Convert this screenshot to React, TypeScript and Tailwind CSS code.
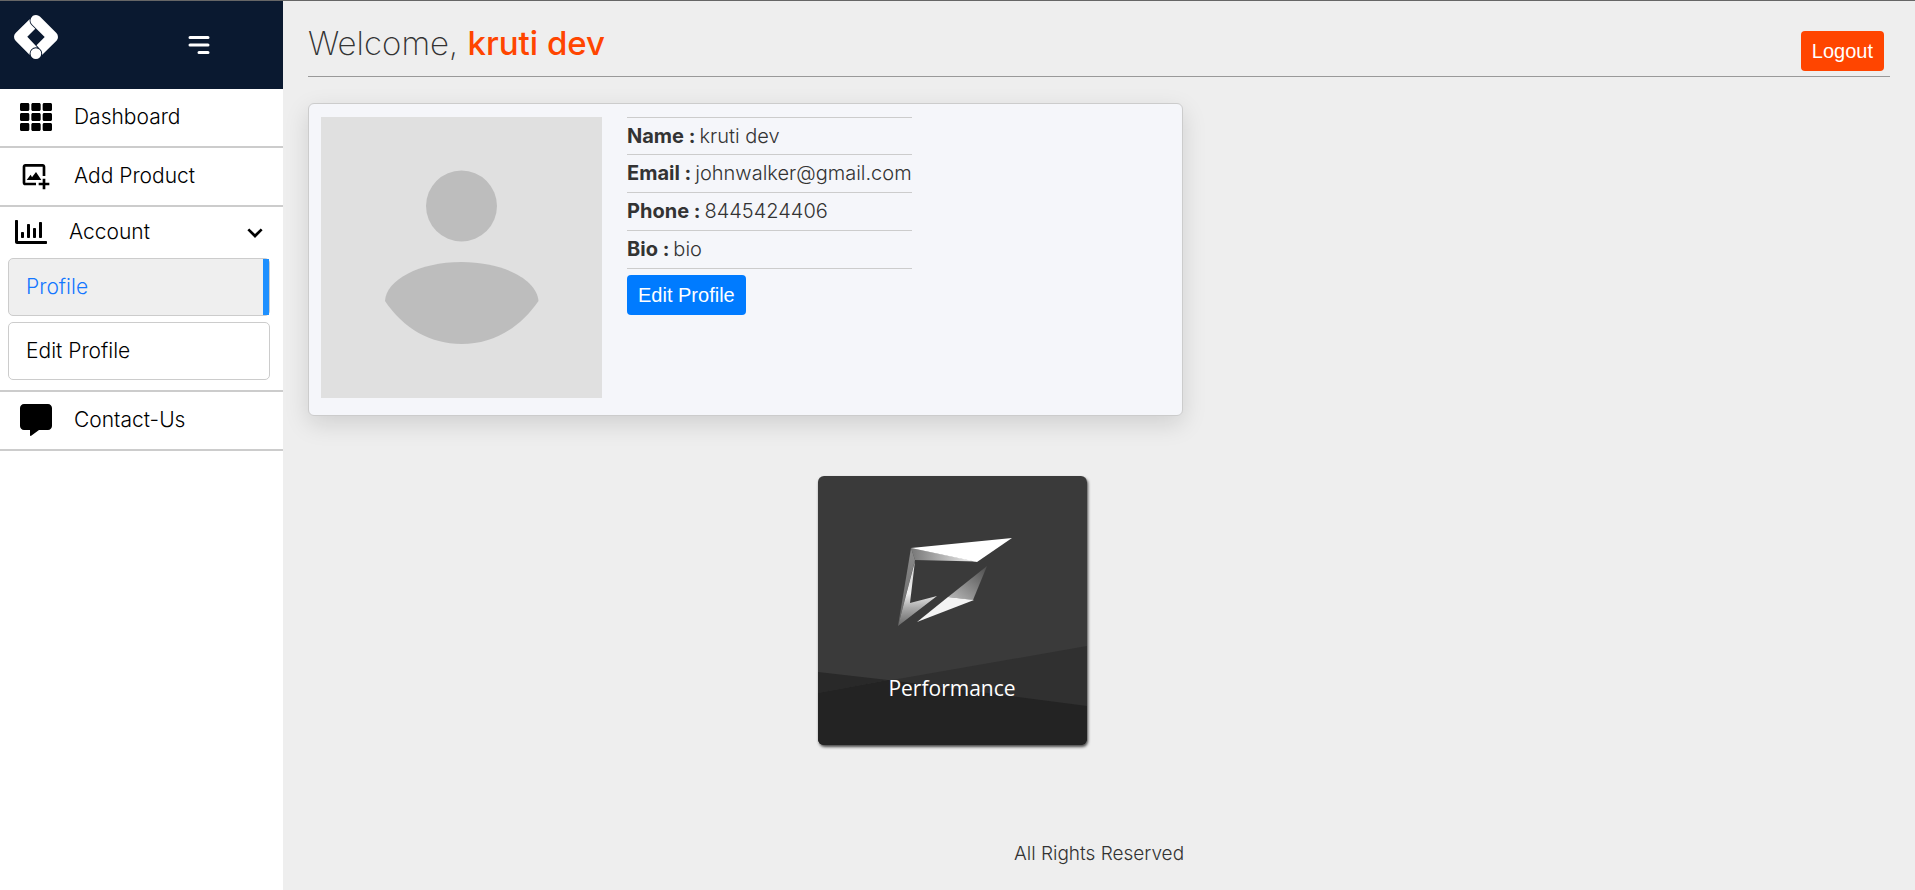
import React from "react";
import { FaTh, FaRegChartBar, FaCommentAlt } from "react-icons/fa";
import { BiImageAdd, BiChevronDown } from "react-icons/bi";
import { HiMenuAlt3 } from "react-icons/hi";
import { SiGoogletagmanager } from "react-icons/si";

const details = [
  { label: "Name", value: "kruti dev" },
  { label: "Email", value: "johnwalker@gmail.com" },
  { label: "Phone", value: "8445424406" },
  { label: "Bio", value: "bio" },
];

function NavLink({ icon, label }: { icon: React.ReactNode; label: string }) {
  return (
    <a href="#" className="flex h-[59px] items-center gap-[22px] border-b-2 border-[#ccc] pb-px pl-5 text-black">
      {icon}
      <span>{label}</span>
    </a>
  );
}

function Sidebar() {
  return (
    <aside className="w-[283px] shrink-0 bg-white text-[21px]">
      <div className="flex h-[88px] items-start justify-between bg-[#0a1930] pt-[14px] pr-[69px] pl-[14px] text-white">
        <SiGoogletagmanager size={44} aria-label="Logo" />
        <button type="button" aria-label="Toggle menu" className="pt-[15px]">
          <HiMenuAlt3 size={30} />
        </button>
      </div>
      <nav>
        <NavLink icon={<FaTh size={32} />} label="Dashboard" />
        <NavLink icon={<BiImageAdd size={32} />} label="Add Product" />
        <div className="border-b-2 border-[#ccc] pb-[10px]">
          <button type="button" aria-expanded="true" className="flex h-[51px] w-full items-center pr-3 pb-px pl-[15px]">
            <FaRegChartBar size={32} />
            <span className="ml-[22px] flex-1 text-left">Account</span>
            <BiChevronDown size={32} />
          </button>
          <div className="flex flex-col gap-[6px] pr-[13px] pl-2">
            <a href="#" className="flex h-[58px] items-stretch justify-between rounded-[5px] border border-[#ccc] bg-[#efefef] text-[#1477ff]">
              <span className="self-center pl-[17px]">Profile</span>
              <span className="w-[6px] bg-[#1e90ff]" />
            </a>
            <a href="#" className="flex h-[58px] items-center rounded-[5px] border border-[#ccc] pl-[17px] text-black">
              Edit Profile
            </a>
          </div>
        </div>
        <NavLink icon={<FaCommentAlt size={32} />} label="Contact-Us" />
      </nav>
    </aside>
  );
}

function Avatar() {
  return (
    <svg viewBox="0 0 281 281" className="size-[281px] shrink-0 bg-[#e0e0e0]" role="img" aria-label="Profile photo">
      <circle cx="140.5" cy="89" r="35.5" fill="#bdbdbd" />
      <path
        d="M64 184C65 163 98 145 140.500 145S216 163 217.500 184C199 211 172 227 140.500 227S82 211 64 184Z"
        fill="#bdbdbd"
      />
    </svg>
  );
}

function ProfileCard() {
  return (
    <section className="mt-[26px] flex w-[875px] max-w-full gap-[25px] rounded-[6px] border border-[#ccc] bg-[#f5f6fa] px-3 pt-[13px] pb-[17px] shadow-[0_8px_24px_rgba(0,0,0,0.13)]">
      <Avatar />
      <div>
        <dl className="min-w-[285px]">
          {details.map((d) => (
            <div
              key={d.label}
              className="flex h-[38px] items-center gap-1 border-b border-[#ccc] pb-px first:border-t"
            >
              <dt className="font-bold text-[#333]">{d.label} :</dt>
              <dd className="text-[#333]">{d.value}</dd>
            </div>
          ))}
        </dl>
        <button
          type="button"
          className="mt-[6px] h-10 rounded-[4px] bg-[#007bff] px-[11px] font-['Liberation_Sans',sans-serif] text-xl font-normal text-white"
        >
          Edit Profile
        </button>
      </div>
    </section>
  );
}

function PerformanceArt() {
  return (
    <svg viewBox="0 0 269 269" className="size-full" aria-hidden="true">
      <defs>
        <linearGradient id="side" x1="0" y1="0" x2="1" y2="0">
          <stop offset="0" stopColor="#777" />
          <stop offset="1" stopColor="#f4f4f4" />
        </linearGradient>
        <linearGradient id="edge" x1="0" y1="0" x2="0" y2="1">
          <stop offset="0" stopColor="#8c8c8c" />
          <stop offset="1" stopColor="#656565" />
        </linearGradient>
        <linearGradient id="inner" x1="0" y1="0" x2="0" y2="1">
          <stop offset="0" stopColor="#d0d0d0" />
          <stop offset="0.500" stopColor="#eee" />
          <stop offset="0.720" stopColor="#aaa" />
          <stop offset="1" stopColor="#666" />
        </linearGradient>
        <linearGradient id="wing" x1="0" y1="1" x2="1" y2="0">
          <stop offset="0" stopColor="#bbb" />
          <stop offset="1" stopColor="#4c4c4c" />
        </linearGradient>
      </defs>
      <rect width="269" height="269" fill="#3a3a3a" />
      <path d="M0 217 269 170V269H0Z" fill="#303030" />
      <path d="M0 196 70 204 0 217Z" fill="#292929" />
      <path d="M0 217 70 204 269 230V269H0Z" fill="#232323" />
      <path d="M93 72 97 84 159 85.500Z" fill="url(#side)" />
      <path d="M93 72 194 62 159 86Z" fill="#fff" />
      <path d="M93 72 97 84 80 150Z" fill="url(#edge)" />
      <path d="M97 85 80 150 119 120 92 127Z" fill="url(#inner)" />
      <path d="M169 90 155 124 130 121Z" fill="url(#wing)" />
      <path d="M130 121 156 124 99 146Z" fill="#f3f3f3" />
    </svg>
  );
}

export default function App() {
  return (
    <div className="flex min-h-screen border-t border-[#666] bg-[#eee] font-['Inter','Noto_Sans',sans-serif] font-light">
      <Sidebar />
      <main className="flex min-w-0 flex-1 flex-col px-[25px] text-xl text-[#333]">
        <header className="flex h-[76px] items-end justify-between border-b border-[#999] pr-[6px] pb-[5px]">
          <h1 className="pb-2 text-[33px] leading-10 font-extralight">
            Welcome, <span className="font-medium text-[#ff4500]">kruti dev</span>
          </h1>
          <button
            type="button"
            className="h-10 rounded-[4px] bg-[#ff4500] px-[11px] font-['Liberation_Sans',sans-serif] font-normal text-white"
          >
            Logout
          </button>
        </header>
        <ProfileCard />
        <div className="mt-[60px] flex w-[1288px] max-w-full justify-center">
          <a
            href="#"
            className="relative block size-[269px] overflow-hidden rounded-[6px] shadow-[1px_2px_3px_rgba(0,0,0,0.7)]"
          >
            <PerformanceArt />
            <span className="absolute inset-x-0 bottom-[42px] text-center font-['Open_Sans','Noto_Sans',sans-serif] text-[21px] font-normal text-white">
              Performance
            </span>
          </a>
        </div>
        <footer className="mt-auto pb-[21px] text-center text-[19px] leading-[30px]">All Rights Reserved</footer>
      </main>
    </div>
  );
}
